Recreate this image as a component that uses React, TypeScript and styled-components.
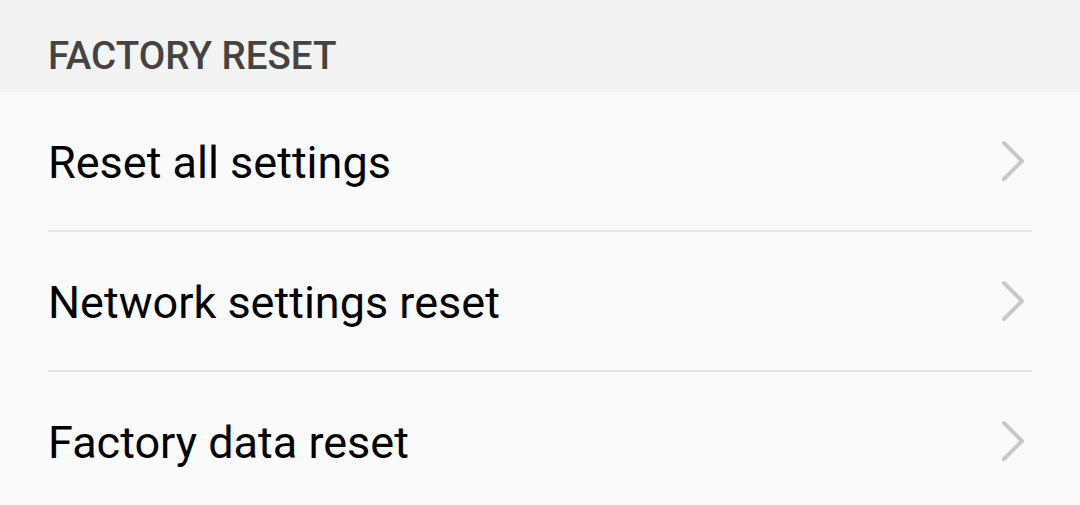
import React from "react";
import styled, { createGlobalStyle } from "styled-components";

const GlobalStyle = createGlobalStyle`
  html, body {
    margin: 0;
    padding: 0;
    background: #fafafa;
    font-family: Roboto, "Noto Sans", "Liberation Sans", sans-serif;
    -webkit-font-smoothing: antialiased;
  }
`;

const Page = styled.div`
  width: 1080px;
  height: 505px;
  overflow: hidden;
  background: #fafafa;
`;

const SectionHeader = styled.div`
  box-sizing: border-box;
  height: 92px;
  padding: 37px 48px 0;
  background: #f3f3f3;
`;

const SectionTitle = styled.h2`
  margin: 0;
  font-size: 38.5px;
  line-height: 38.5px;
  font-weight: 500;
  color: #444444;
  letter-spacing: 0;
`;

const List = styled.div`
  display: flex;
  flex-direction: column;
`;

const Row = styled.div`
  box-sizing: border-box;
  height: 138px;
  display: flex;
  align-items: center;
  justify-content: space-between;
  padding: 3px 55px 0 48px;
`;

const RowLabel = styled.span`
  font-size: 45px;
  line-height: 45px;
  font-weight: 400;
  color: #000000;
`;

const Divider = styled.div`
  height: 2px;
  margin: 0 48px;
  background: #e5e5e5;
`;

const ChevronIcon = styled.svg`
  flex: none;
  margin-top: -3px;
`;

const Chevron = () => (
  <ChevronIcon width="24" height="42" viewBox="0 0 24 42" fill="none">
    <polyline
      points="3,3 21,21 3,39"
      stroke="#c8c8c8"
      strokeWidth="4"
      strokeLinecap="round"
      strokeLinejoin="round"
    />
  </ChevronIcon>
);

const items = ["Reset all settings", "Network settings reset", "Factory data reset"];

export default function App() {
  return (
    <Page>
      <GlobalStyle />
      <SectionHeader>
        <SectionTitle>FACTORY RESET</SectionTitle>
      </SectionHeader>
      <List>
        {items.map((label, i) => (
          <React.Fragment key={label}>
            <Row>
              <RowLabel>{label}</RowLabel>
              <Chevron />
            </Row>
            {i < items.length - 1 && <Divider />}
          </React.Fragment>
        ))}
      </List>
    </Page>
  );
}
